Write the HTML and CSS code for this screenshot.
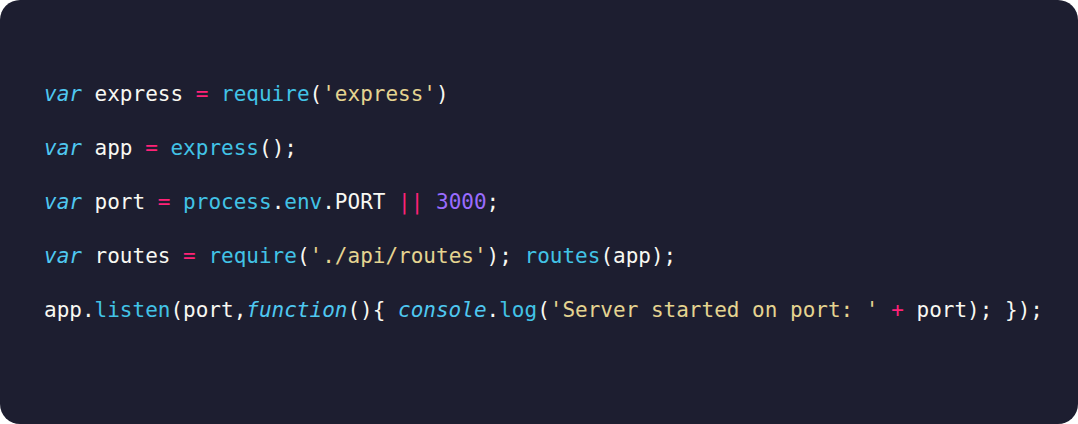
FILE: index.html
```html
<!DOCTYPE html>
<html>
<head>
<meta charset="utf-8">
<link rel="stylesheet" href="styles.css">
</head>
<body>
<div class="card">
<pre class="code"><code><span class="line"><span class="kw">var</span> express <span class="op">=</span> <span class="fn">require</span>(<span class="str">'express'</span>)</span>
<span class="line"><span class="kw">var</span> app <span class="op">=</span> <span class="fn">express</span>();</span>
<span class="line"><span class="kw">var</span> port <span class="op">=</span> <span class="fn">process</span>.<span class="fn">env</span>.PORT <span class="op">||</span> <span class="num">3000</span>;</span>
<span class="line"><span class="kw">var</span> routes <span class="op">=</span> <span class="fn">require</span>(<span class="str">'./api/routes'</span>); <span class="fn">routes</span>(app);</span>
<span class="line">app.<span class="fn">listen</span>(port,<span class="kw">function</span>(){ <span class="kw">console</span>.<span class="fn">log</span>(<span class="str">'Server started on port: '</span> <span class="op">+</span> port); });</span></code></pre>
</div>
</body>
</html>
```

FILE: styles.css
```css
html, body {
  margin: 0;
  padding: 0;
  background: #ffffff;
}

.card {
  width: 1078px;
  height: 424px;
  box-sizing: border-box;
  background: #1d1e30;
  border-radius: 20px;
  padding: 67px 44px 0;
}

.code {
  margin: 0;
  font-family: "DejaVu Sans Mono", "Liberation Mono", monospace;
  font-size: 21px;
  color: #f8f8f2;
}

.line {
  display: block;
  line-height: 54px;
}

.code code {
  display: flex;
  flex-direction: column;
  font-family: inherit;
}

.kw {
  color: #4fc8f0;
  font-style: italic;
}

.fn {
  color: #42c3e6;
}

.op {
  color: #ff2277;
}

.str {
  color: #e5d490;
}

.num {
  color: #9a6cff;
}
```
